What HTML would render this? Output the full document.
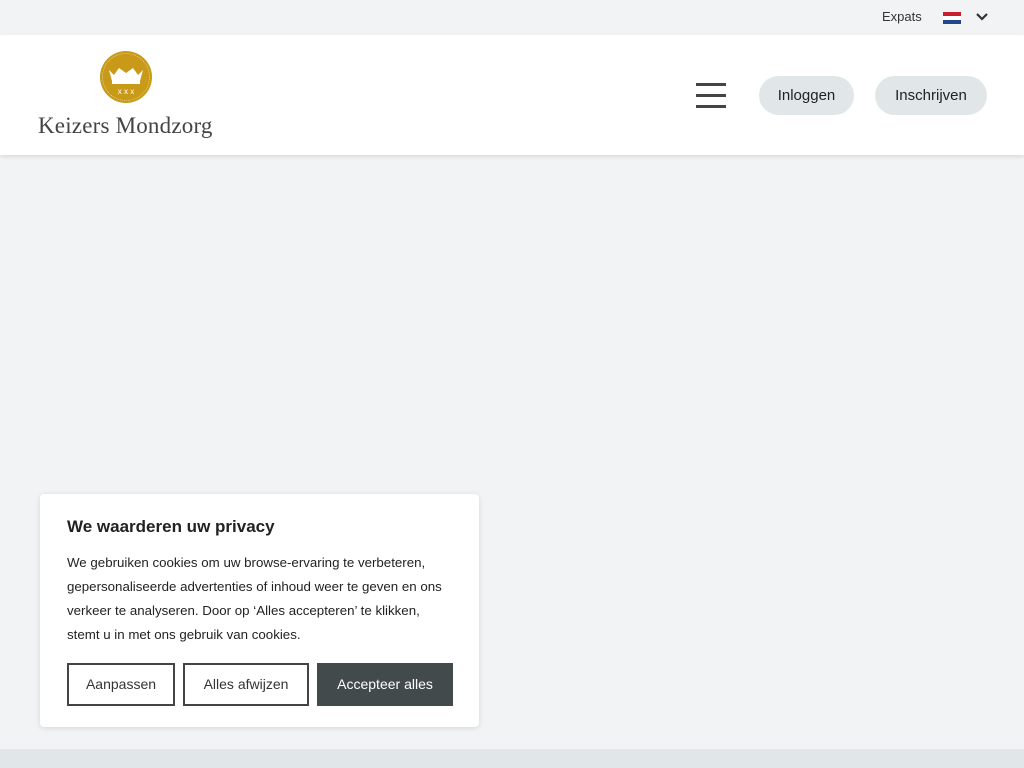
<!DOCTYPE html>
<html><head><meta charset="utf-8"><style>
body{margin:0;width:1024px;height:768px;background:#f2f3f5;font-family:"Liberation Sans",sans-serif;position:relative;overflow:hidden;color:#222}
.top{height:35px;position:relative}
.top .ex{position:absolute;left:882px;top:9px;font-size:13px;color:#333}
.flag{position:absolute;left:943px;top:12px;width:18px;height:12px;background:linear-gradient(#c8202f 0 33%,#fff 33% 66%,#21468b 66%)}
.chev{position:absolute;left:976px;top:12px}
header{position:absolute;top:35px;left:0;width:1024px;height:120px;background:#fff;box-shadow:0 2px 4px rgba(0,0,0,.1)}
.logo{position:absolute;left:99px;top:15px}
.brand{position:absolute;left:38px;top:78px;font-family:"Liberation Serif",serif;font-size:23px;color:#444;letter-spacing:.2px}
.burger{position:absolute;left:696px;top:48px;width:30px}
.burger i{display:block;height:3px;background:#444;margin-bottom:8px}
.btn{position:absolute;top:41px;height:39px;border-radius:20px;background:#e1e7e8;font-size:15px;line-height:39px;text-align:center;color:#222}
.card{position:absolute;left:40px;top:494px;width:439px;height:233px;background:#fff;border-radius:4px;box-shadow:0 1px 6px rgba(0,0,0,.12)}
.card h2{margin:0;position:absolute;left:27px;top:23px;font-size:17px;font-weight:bold;color:#222}
.card p{margin:0;position:absolute;left:27px;top:57px;width:380px;font-size:13.3px;line-height:24px;color:#222}
.b{position:absolute;top:169px;height:43px;box-sizing:border-box;border:2px solid #444;font-size:14px;line-height:39px;text-align:center;color:#333;background:#fff}
.foot{position:absolute;left:0;top:749px;width:1024px;height:19px;background:#e1e7e8}
</style></head><body>
<div class="top"><span class="ex">Expats</span><div class="flag"></div>
<svg class="chev" width="12" height="10" viewBox="0 0 12 10"><path d="M1 2l5 5 5-5" stroke="#333" stroke-width="2.2" fill="none"/></svg></div>
<header>
<svg class="logo" width="54" height="54" viewBox="0 0 54 54"><circle cx="27" cy="27" r="26" fill="#c89a17"/><circle cx="27" cy="27" r="23.5" fill="none" stroke="#f3e3b0" stroke-width=".6" stroke-dasharray="1 1"/>
<path d="M10 20l5 5 5-7 7 5 7-5 5 7 5-5-3 11H13z" fill="#fff"/><rect x="13" y="31" width="28" height="3" fill="#fff"/>
<text x="27" y="44" font-size="8" fill="#fff" text-anchor="middle" font-family="Liberation Sans">x x x</text></svg>
<div class="brand">Keizers Mondzorg</div>
<div class="burger"><i></i><i></i><i></i></div>
<div class="btn" style="left:759px;width:95px">Inloggen</div>
<div class="btn" style="left:875px;width:112px">Inschrijven</div>
</header>
<div class="card"><h2>We waarderen uw privacy</h2>
<p>We gebruiken cookies om uw browse-ervaring te verbeteren, gepersonaliseerde advertenties of inhoud weer te geven en ons verkeer te analyseren. Door op ‘Alles accepteren’ te klikken, stemt u in met ons gebruik van cookies.</p>
<div class="b" style="left:27px;width:108px">Aanpassen</div>
<div class="b" style="left:143px;width:126px">Alles afwijzen</div>
<div class="b" style="left:277px;width:136px;background:#434a4b;border-color:#434a4b;color:#fff">Accepteer alles</div>
</div>
<div class="foot"></div>
</body></html>
